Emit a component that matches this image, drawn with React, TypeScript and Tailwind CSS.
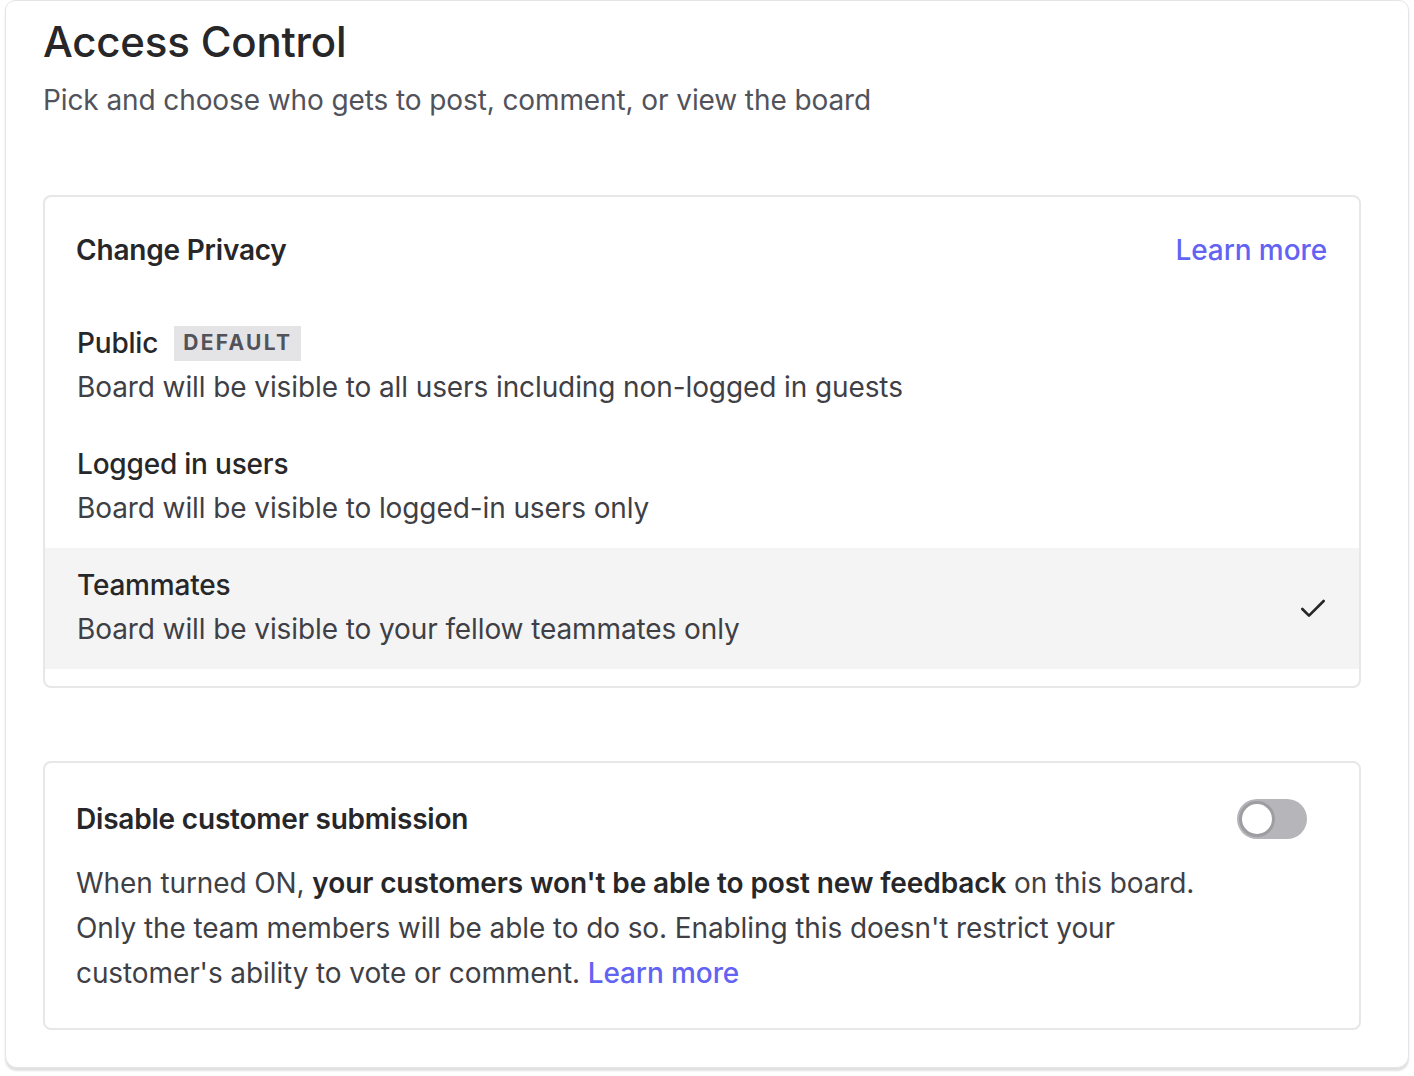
import { Check } from 'lucide-react';

const font = { fontFamily: 'Inter, "Noto Sans", sans-serif' };

function PrivacyRow({
  title,
  desc,
  badge,
  selected,
}: {
  title: string;
  desc: string;
  badge?: string;
  selected?: boolean;
}) {
  return (
    <div
      className={
        'flex items-center justify-between pl-[32px] pr-[32px] pt-[20px] pb-[20px] ' +
        (selected ? 'bg-[#f4f4f4]' : '')
      }
    >
      <div>
        <div className="flex items-center gap-[16px] h-[34px]">
          <span className="text-[28px] font-medium text-[#27272a] tracking-[-0.2px]">{title}</span>
          {badge && (
            <span className="bg-[#e4e4e7] px-[9px] h-[35px] flex items-center text-[21px] font-bold tracking-[2.3px] text-[#52525b]">
              {badge}
            </span>
          )}
        </div>
        <p className="mt-[7px] text-[28px] leading-[40px] text-[#3f3f46] tracking-[-0.1px]">{desc}</p>
      </div>
      {selected && <Check className="w-[32px] h-[32px] text-[#27272a] -mr-[2px]" strokeWidth={2} />}
    </div>
  );
}

export default function App() {
  return (
    <div className="min-h-screen bg-white pl-[5px] pr-[5px]" style={font}>
      <div className="rounded-b-[12px] rounded-t-[10px] border border-[#e5e5e5] bg-white shadow-[0_3px_2px_rgba(0,0,0,0.12)] pl-[37px] pr-[47px] pb-[37px]">
        <h1 className="mt-[15px] text-[42px] leading-[52px] font-medium text-[#27272a] tracking-[-0.2px]">
          Access Control
        </h1>
        <p className="mt-[14px] text-[28px] leading-[36px] text-[#52525b] tracking-[-0.1px]">
          Pick and choose who gets to post, comment, or view the board
        </p>

        <div className="mt-[77px] rounded-[8px] border-2 border-[#e7e7e7] pb-[17px]">
          <div className="flex items-center justify-between pl-[31px] pr-[32px] pt-[36px] pb-[39px]">
            <h2 className="text-[28px] leading-[34px] font-semibold text-[#27272a] tracking-[-0.2px]">
              Change Privacy
            </h2>
            <a className="text-[28px] leading-[34px] font-medium text-[#6363f3] tracking-[-0.1px]">Learn more</a>
          </div>
          <PrivacyRow
            title="Public"
            badge="DEFAULT"
            desc="Board will be visible to all users including non-logged in guests"
          />
          <PrivacyRow title="Logged in users" desc="Board will be visible to logged-in users only" />
          <PrivacyRow
            title="Teammates"
            desc="Board will be visible to your fellow teammates only"
            selected
          />
        </div>

        <div className="mt-[73px] rounded-[8px] border-2 border-[#e7e7e7] pl-[31px] pr-[52px] pt-[36px] pb-[32px]">
          <div className="flex items-center justify-between">
            <h2 className="text-[28px] leading-[40px] font-semibold text-[#27272a] tracking-[-0.2px]">
              Disable customer submission
            </h2>
            <div className="w-[70px] h-[40px] rounded-full bg-[#b5b5ba] p-[2px] flex items-center">
              <div className="w-[36px] h-[36px] rounded-full bg-white border-[3px] border-[#9d9da2]" />
            </div>
          </div>
          <p className="mt-[22px] text-[28px] leading-[45px] text-[#3f3f46] tracking-[-0.1px] whitespace-nowrap">
            When turned ON, <span className="font-semibold text-[#27272a]">your customers won't be able to post new feedback</span> on this board.
            <br />
            Only the team members will be able to do so. Enabling this doesn't restrict your
            <br />
            customer's ability to vote or comment. <a className="font-medium text-[#6363f3]">Learn more</a>
          </p>
        </div>
      </div>
    </div>
  );
}
